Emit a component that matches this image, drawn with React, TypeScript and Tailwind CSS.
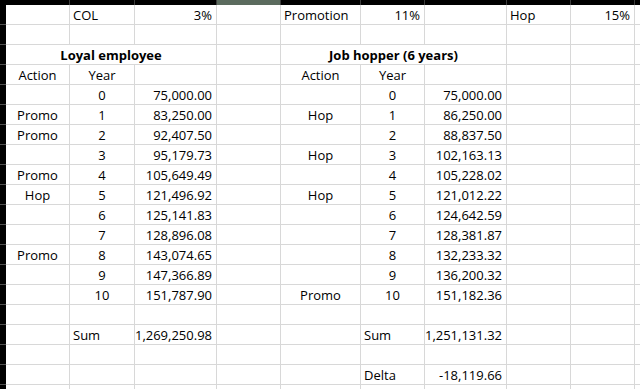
import React from "react";

type C = { t?: string; a?: "l" | "r" | "c"; b?: boolean; span?: number };

const cols = [64, 65, 82, 64, 80, 64, 82, 64, 64, 40];

const L = (t: string): C => ({ t, a: "l" });
const R = (t: string): C => ({ t, a: "r" });
const M = (t: string): C => ({ t, a: "c" });
const E: C = {};

function row(
  act1: string,
  y1: string,
  v1: string,
  act2: string,
  y2: string,
  v2: string
): C[] {
  return [M(act1), M(y1), R(v1), E, M(act2), M(y2), R(v2), E, E, E];
}

const rows: C[][] = [
  [E, L("COL"), R("3%"), E, L("Promotion"), R("11%"), E, L("Hop"), R("15%"), E],
  [E, E, E, E, E, E, E, E, E, E],
  [{ t: "Loyal employee", a: "c", b: true, span: 3 }, E, { t: "Job hopper (6 years)", a: "c", b: true, span: 3 }, E, E, E],
  [M("Action"), M("Year"), E, E, M("Action"), M("Year"), E, E, E, E],
  row("", "0", "75,000.00", "", "0", "75,000.00"),
  row("Promo", "1", "83,250.00", "Hop", "1", "86,250.00"),
  row("Promo", "2", "92,407.50", "", "2", "88,837.50"),
  row("", "3", "95,179.73", "Hop", "3", "102,163.13"),
  row("Promo", "4", "105,649.49", "", "4", "105,228.02"),
  row("Hop", "5", "121,496.92", "Hop", "5", "121,012.22"),
  row("", "6", "125,141.83", "", "6", "124,642.59"),
  row("", "7", "128,896.08", "", "7", "128,381.87"),
  row("Promo", "8", "143,074.65", "", "8", "132,233.32"),
  row("", "9", "147,366.89", "", "9", "136,200.32"),
  row("", "10", "151,787.90", "Promo", "10", "151,182.36"),
  [E, E, E, E, E, E, E, E, E, E],
  [E, L("Sum"), R("1,269,250.98"), E, E, L("Sum"), R("1,251,131.32"), E, E, E],
  [E, E, E, E, E, E, E, E, E, E],
  [E, E, E, E, E, L("Delta"), R("-18,119.66"), E, E, E],
  [E, E, E, E, E, E, E, E, E, E],
];

export default function App() {
  return (
    <div
      className="w-[640px] h-[389px] overflow-hidden bg-white text-black flex flex-col"
      style={{ fontFamily: '"Open Sans", "Noto Sans", sans-serif' }}
    >
      {/* column header strip */}
      <div className="flex h-[5px] shrink-0 bg-black">
        <div className="w-[6px] shrink-0 bg-black" />
        {cols.map((w, i) => (
          <div
            key={i}
            className={`shrink-0 border-r border-[#3c3c3c] ${i === 3 ? "bg-[#5b6b5e]" : "bg-black"}`}
            style={{ width: w }}
          />
        ))}
      </div>
      {rows.map((r, ri) => {
        let ci = 0;
        return (
          <div key={ri} className="flex h-[20px] shrink-0">
            <div className="w-[6px] shrink-0 bg-black border-b border-[#505050]" />
            {r.map((c, k) => {
              const span = c.span ?? 1;
              let w = 0;
              for (let s = 0; s < span; s++) w += cols[ci + s] ?? 0;
              ci += span;
              if (w === 0) return null;
              const align =
                c.a === "r" ? "justify-end pr-[4px]" : c.a === "c" ? "justify-center" : "justify-start pl-[3px]";
              return (
                <div
                  key={k}
                  className={`shrink-0 flex items-end pb-[2px] border-r border-b border-[#d8d8d8] text-[13px] leading-none whitespace-nowrap ${align} ${c.b ? "font-bold" : ""}`}
                  style={{ width: w }}
                >
                  {c.t}
                </div>
              );
            })}
          </div>
        );
      })}
    </div>
  );
}
